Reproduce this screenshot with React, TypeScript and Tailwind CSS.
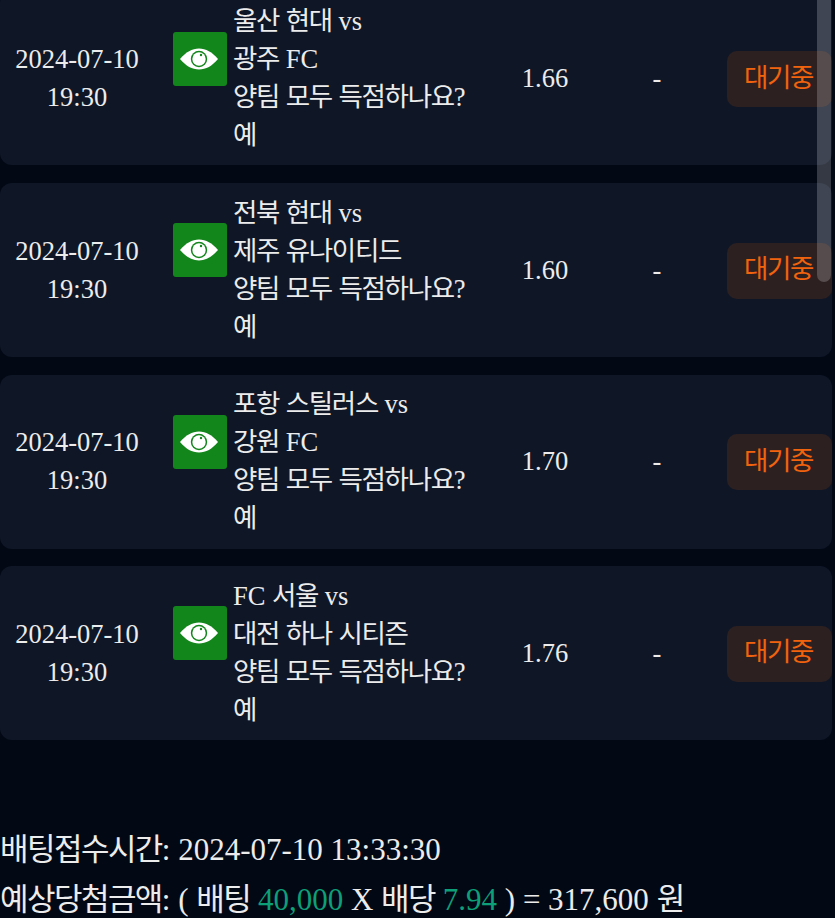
const rows = [
  { home: '울산 현대 vs', away: '광주 FC', odds: '1.66' },
  { home: '전북 현대 vs', away: '제주 유나이티드', odds: '1.60' },
  { home: '포항 스틸러스 vs', away: '강원 FC', odds: '1.70' },
  { home: 'FC 서울 vs', away: '대전 하나 시티즌', odds: '1.76' },
]

// hangul runs are set narrower than the installed CJK font's advance
function Ko({ text }: { text: string }) {
  return (
    <>
      {text.split(/([\uAC00-\uD7A3]+)/).map((part, i) =>
        i % 2 === 1 ? (
          <span key={i} className="tracking-[-0.05em]">
            {part}
          </span>
        ) : (
          part
        ),
      )}
    </>
  )
}

function EyeIcon() {
  return (
    <svg width="40" height="24" viewBox="0 0 40 24" className="mr-[2px]">
      <path fill="#fff" d="M1 12C7 5 13 1.500 20 1.500S33 5 39 12c-6 7-12 10.500-19 10.500S7 19 1 12z" />
      <circle cx="20" cy="12" r="8.200" fill="#12851b" />
      <circle cx="20" cy="12" r="6.700" fill="#fff" />
      <circle cx="22" cy="8" r="1.200" fill="#12851b" />
    </svg>
  )
}

function BetRow({ home, away, odds }: { home: string; away: string; odds: string }) {
  return (
    <div className="flex h-[174px] w-[832px] items-center rounded-xl bg-[#0f1727] pb-[0.6px] text-[#ececec]">
      <div className="w-[154px] shrink-0 text-center">
        <div>2024-07-10</div>
        <div>19:30</div>
      </div>
      <div className="ml-[19px] mt-[-39px] flex h-[54px] w-[54px] shrink-0 items-center justify-center rounded-[3px] bg-[#12851b]">
        <EyeIcon />
      </div>
      <div className="ml-[6px] w-[267px] shrink-0">
        <div><Ko text={home} /></div>
        <div><Ko text={away} /></div>
        <div><Ko text="양팀 모두 득점하나요?" /></div>
        <div><Ko text="예" /></div>
      </div>
      <div className="w-[90px] shrink-0 text-center">{odds}</div>
      <div className="ml-[24px] w-[86px] shrink-0 text-center">-</div>
      <div className="ml-[27px] mt-[2px] flex h-[56px] w-[105px] shrink-0 items-center justify-center rounded-[10px] bg-[#2d2021] pb-[3px] pr-[2px] text-[#f2630d]">
        <Ko text="대기중" />
      </div>
    </div>
  )
}

export default function App() {
  return (
    <div className="relative h-[918px] w-[835px] overflow-hidden bg-[#030815] font-['Liberation_Serif','Noto_Sans_CJK_KR',serif] text-[26.500px] leading-[38px]">
      <div className="mt-[-8.700px] flex flex-col gap-[17.670px]">
        {rows.map((row) => (
          <BetRow key={row.odds} {...row} />
        ))}
      </div>
      <div className="mt-[84.700px] text-[31px] leading-[50px] text-[#ececec]">
        <div><Ko text="배팅접수시간" />: 2024-07-10 13:33:30</div>
        <div>
          <Ko text="예상당첨금액" />: ( <Ko text="배팅" /> <span className="text-[#0d9f78]">40,000</span> X <Ko text="배당" />{' '}
          <span className="text-[#0d9f78]">7.94</span> ) = 317,600 <Ko text="원" />
        </div>
      </div>
      <div className="absolute right-[4px] top-0 h-[282px] w-[14px] rounded-b-lg bg-white/20" />
    </div>
  )
}
